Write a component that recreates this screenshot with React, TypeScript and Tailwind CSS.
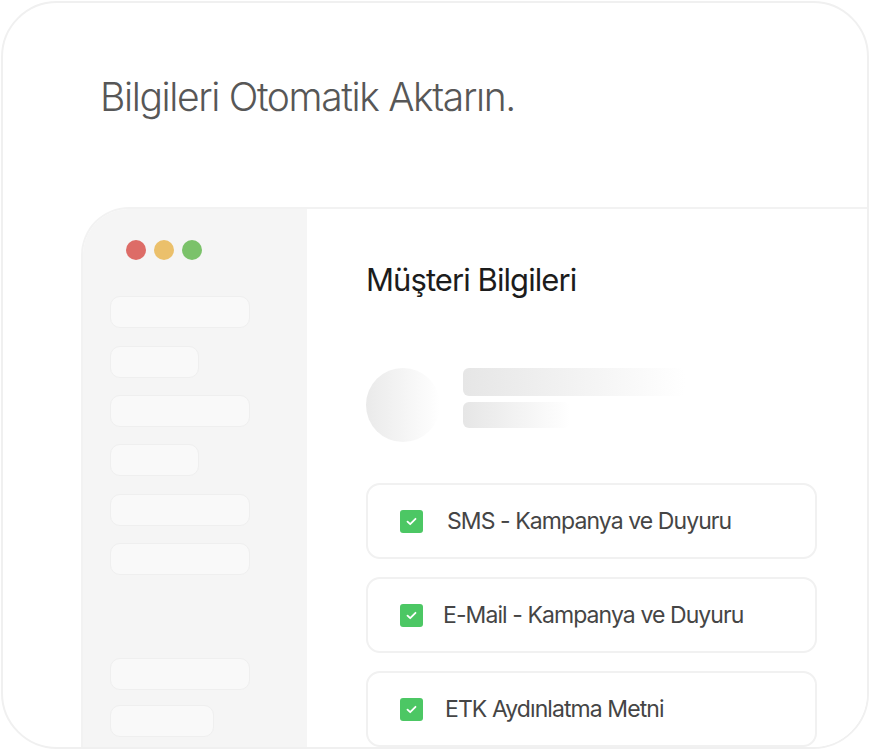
const navPills = [
  { w: "w-[140px]", mt: "mt-0" },
  { w: "w-[89px]", mt: "mt-[18px]" },
  { w: "w-[140px]", mt: "mt-[17px]" },
  { w: "w-[89px]", mt: "mt-[17px]" },
  { w: "w-[140px]", mt: "mt-[18px]" },
  { w: "w-[140px]", mt: "mt-[17px]" },
  { w: "w-[140px]", mt: "mt-[83px]" },
  { w: "w-[104px]", mt: "mt-[15px]" },
];

const consents = [
  { label: "SMS - Kampanya ve Duyuru", pl: "pl-[24px]" },
  { label: "E-Mail - Kampanya ve Duyuru", pl: "pl-[20px]" },
  { label: "ETK Aydınlatma Metni", pl: "pl-[22px]" },
];

function CheckIcon() {
  return (
    <div className="flex h-[23px] w-[23px] shrink-0 items-center justify-center rounded-[3px] bg-[#4cc764]">
      <svg width="11" height="9" viewBox="0 0 11 9" fill="none">
        <path
          d="M1.5 4.6 4.2 7.2 9.5 1.8"
          stroke="white"
          strokeWidth="1.8"
          strokeLinecap="round"
          strokeLinejoin="round"
        />
      </svg>
    </div>
  );
}

export default function App() {
  return (
    <div className="h-[750px] w-[870px] bg-white p-[1px] font-['Inter',sans-serif]">
      <div className="h-[748px] w-[868px] overflow-hidden rounded-[56px] border-2 border-[#f0f0f0] bg-white">
        <h1 className="pl-[97px] pt-[70px] text-[39px] font-light leading-[47px] tracking-[-0.035em] text-[#575757]">
          Bilgileri Otomatik Aktarın.
        </h1>

        <div className="ml-[78px] mt-[87px] flex h-[600px] w-[900px] overflow-hidden rounded-tl-[48px] border-l-2 border-t-2 border-[#f2f2f2]">
          <div className="flex w-[224px] shrink-0 flex-col bg-[#f5f5f5] pl-[27px] pt-[31px]">
            <div className="flex gap-[8px] pl-[16px]">
              <span className="h-[20px] w-[20px] rounded-full bg-[#dd6c67]" />
              <span className="h-[20px] w-[20px] rounded-full bg-[#ebc06b]" />
              <span className="h-[20px] w-[20px] rounded-full bg-[#7bc26a]" />
            </div>
            <div className="mt-[36px] flex flex-col">
              {navPills.map((p, i) => (
                <div
                  key={i}
                  className={`h-[32px] ${p.w} ${p.mt} rounded-[10px] border border-[#efefef] bg-[#f9f9f9]`}
                />
              ))}
            </div>
          </div>

          <div className="flex-1 bg-white pl-[59px] pt-[52px]">
            <h2 className="text-[31px] leading-[38px] tracking-[-0.03em] text-[#1c1c1c]">
              Müşteri Bilgileri
            </h2>

            <div className="mt-[69px] flex items-start gap-[23px]">
              <div className="h-[74px] w-[74px] rounded-full bg-gradient-to-r from-[#eaeaea] to-white" />
              <div className="flex flex-col gap-[6px]">
                <div className="h-[28px] w-[222px] rounded-[6px] bg-gradient-to-r from-[#e6e6e6] to-white" />
                <div className="h-[26px] w-[107px] rounded-[6px] bg-gradient-to-r from-[#e6e6e6] to-white" />
              </div>
            </div>

            <div className="mt-[41px] flex flex-col gap-[18px]">
              {consents.map((c) => (
                <div
                  key={c.label}
                  className="flex h-[76px] w-[451px] items-center rounded-[14px] border-2 border-[#f1f1f1] pl-[32px]"
                >
                  <CheckIcon />
                  <span className={`${c.pl} text-[23px] tracking-[-0.04em] text-[#454545]`}>
                    {c.label}
                  </span>
                </div>
              ))}
            </div>
          </div>
        </div>
      </div>
    </div>
  );
}
